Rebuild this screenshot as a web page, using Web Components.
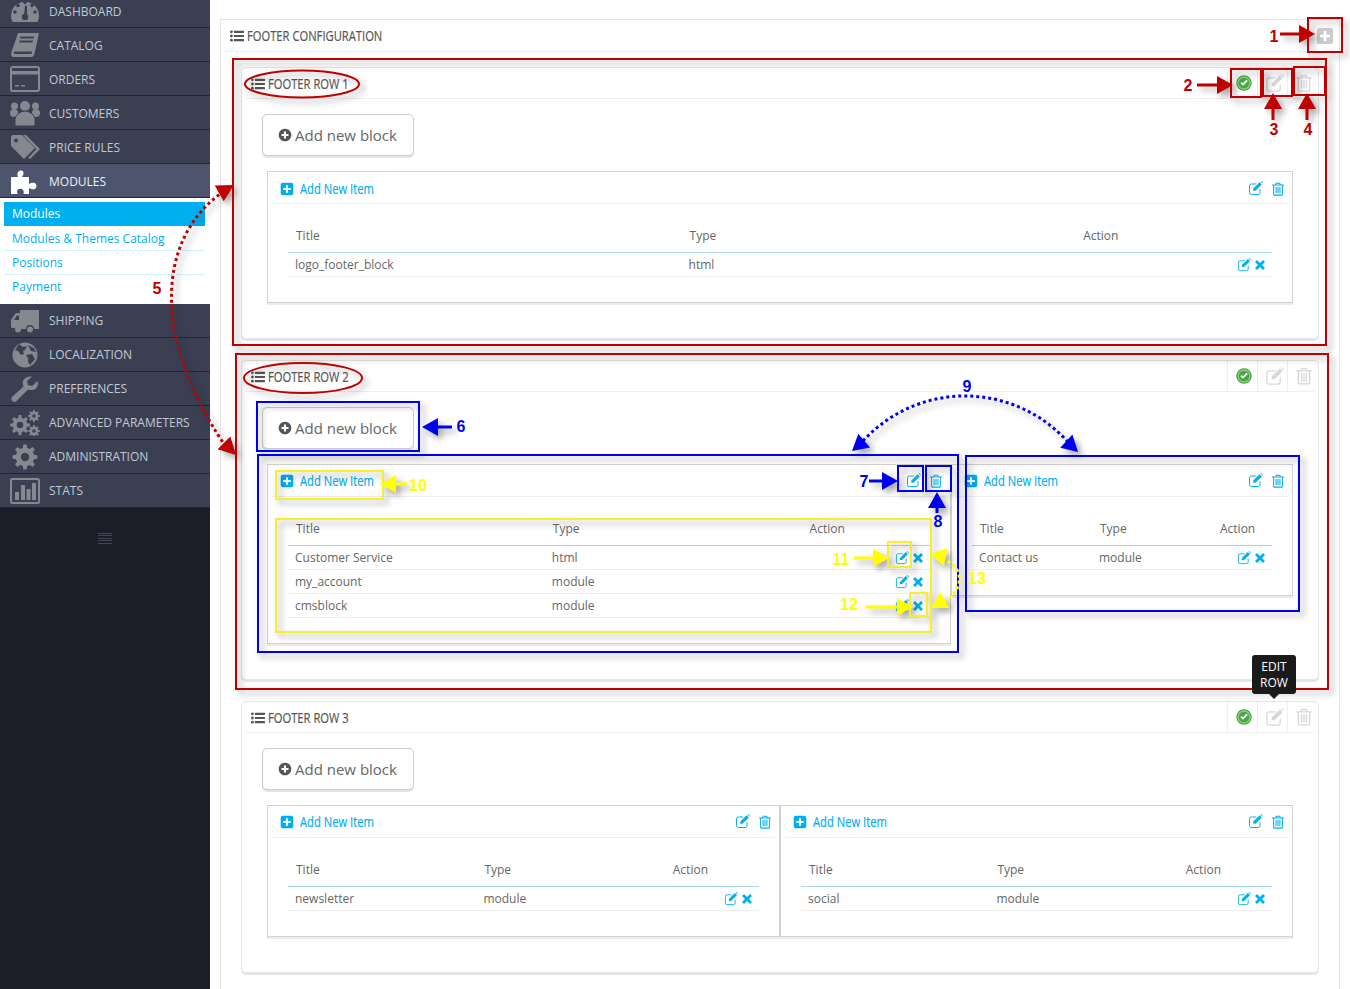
<!DOCTYPE html>
<html lang="en"><head><meta charset="utf-8"><title>Footer configuration</title>
<style>
html,body{margin:0;padding:0;background:#fff;height:989px;overflow:hidden;font-family:"Open Sans","Liberation Sans",sans-serif}
</style></head><body>
<x-app>
  <x-sidebar slot="side">
    <x-nav-item icon="gauge" low>DASHBOARD</x-nav-item>
    <x-nav-item icon="book" low>CATALOG</x-nav-item>
    <x-nav-item icon="card" low>ORDERS</x-nav-item>
    <x-nav-item icon="users" low>CUSTOMERS</x-nav-item>
    <x-nav-item icon="tags" low>PRICE RULES</x-nav-item>
    <x-nav-item icon="puzzle" active low>MODULES</x-nav-item>
    <x-sub-nav>
      <x-sub-item active>Modules</x-sub-item>
      <x-sub-item tall>Modules &amp; Themes Catalog</x-sub-item>
      <x-sub-item>Positions</x-sub-item>
      <x-sub-item last>Payment</x-sub-item>
    </x-sub-nav>
    <x-nav-item icon="truck">SHIPPING</x-nav-item>
    <x-nav-item icon="globe">LOCALIZATION</x-nav-item>
    <x-nav-item icon="wrench">PREFERENCES</x-nav-item>
    <x-nav-item icon="cogs">ADVANCED PARAMETERS</x-nav-item>
    <x-nav-item icon="cog">ADMINISTRATION</x-nav-item>
    <x-nav-item icon="chart">STATS</x-nav-item>
  </x-sidebar>
  <x-config-panel heading="FOOTER CONFIGURATION">
    <x-row-panel heading="FOOTER ROW 1" cols="1fr">
      <x-block low><x-table-row name="logo_footer_block" kind="html"></x-table-row></x-block>
    </x-row-panel>
    <x-row-panel heading="FOOTER ROW 2" cols="684px 342px">
      <x-block>
        <x-table-row name="Customer Service" kind="html"></x-table-row>
        <x-table-row name="my_account" kind="module"></x-table-row>
        <x-table-row name="cmsblock" kind="module"></x-table-row>
      </x-block>
      <x-block><x-table-row name="Contact us" kind="module"></x-table-row></x-block>
    </x-row-panel>
    <x-row-panel heading="FOOTER ROW 3" cols="513px 513px">
      <x-block><x-table-row name="newsletter" kind="module"></x-table-row></x-block>
      <x-block><x-table-row name="social" kind="module"></x-table-row></x-block>
    </x-row-panel>
  </x-config-panel>
  <x-annotations slot="over"></x-annotations>
  <x-tip slot="over">EDIT<br>ROW</x-tip>
</x-app>
<script>
const gear=(cx,cy,R,r,n,hole)=>{let d='';const s=Math.PI*2/n;for(let i=0;i<n;i++){const a=i*s;
 const p=[[a-s*.3,r],[a-s*.17,R],[a+s*.17,R],[a+s*.3,r]];
 p.forEach(([t,q],j)=>{d+=(i===0&&j===0?'M':'L')+(cx+q*Math.cos(t)).toFixed(2)+' '+(cy+q*Math.sin(t)).toFixed(2)})}
 d+='Z M'+(cx+hole)+' '+cy+' a'+hole+' '+hole+' 0 1 0 '+(-2*hole)+' 0 a'+hole+' '+hole+' 0 1 0 '+(2*hole)+' 0Z';return d};
const BG='var(--cut,#3a4052)';
const SIDE={
gauge:`<path d="M2.5 24A14 14 0 1 1 27.500 24Z"/><g fill="${BG}"><circle cx="15" cy="4.500" r="1.800"/><circle cx="8" cy="7.500" r="1.800"/><circle cx="22" cy="7.500" r="1.800"/><circle cx="5" cy="14" r="1.800"/><circle cx="25" cy="14" r="1.800"/><circle cx="15" cy="19" r="3.200"/><path d="M14 18 15 7.500 17 8 17 18Z"/></g>`,
book:`<path d="M8 1H29L24.500 21.500Q24 25 21 25H4Q0 25 1.500 20Z"/><g fill="${BG}"><path d="M10.500 4.500H24L23.600 6.500H10Z"/><path d="M9.600 8.500H23L22.600 10.500H9.200Z"/><path d="M4.500 19.500H22L21.600 22H5Q3.500 22 3.800 20.500Z"/></g>`,
card:`<rect x="1" y="1" width="28" height="24" rx="2" fill="none" stroke="currentColor" stroke-width="2"/><rect x="1" y="5" width="28" height="3.500"/><rect x="5" y="19" width="4" height="1.500"/><rect x="11" y="19" width="4" height="1.500"/>`,
users:`<circle cx="15" cy="6" r="5"/><circle cx="4.500" cy="6" r="3.500"/><circle cx="25.500" cy="6" r="3.500"/><circle cx="4" cy="13" r="4"/><circle cx="26" cy="13" r="4"/><path d="M9 13Q15 9 21 13Q25 16 25 19V26H5V19Q5 16 9 13Z" stroke="${BG}"/>`,
tags:`<path d="M1 3Q1 1 3 1H12L25 14 14 25 1 12ZM6 4.500A2 2 0 1 0 6.010 4.500Z" fill-rule="evenodd"/><path d="M16 1 30 15 20 25 18 24 26.500 15 13 1Z"/>`,
puzzle:`<path d="M1 9H8Q6 4 10 2.500 14 2 13.500 6 12.500 8 12 9H19V16Q22 14 25 15 28 18 25 21 22 22 19 20V27H13Q15 23 12 21 8 20 7 23 7 25 8 27H1Z"/>`,
truck:`<path d="M10 2H29V21H24A4 4 0 0 0 16 21H11A4 4 0 0 0 5 20H2Q1 20 1 18V12L5 6Q6 5 7 5H10ZM4 12H9V7.500H7Z" fill-rule="evenodd"/><circle cx="8" cy="21.500" r="3"/><circle cx="20" cy="21.500" r="3"/>`,
globe:`<circle cx="15" cy="13" r="12.500"/><path fill="${BG}" d="M9 2 13 5 17 4 15 8 13 9 14 12 11 13 8 9 5 8ZM16 13 22 12 25 17 20 23 18 20 18 16ZM18 3 24 6 26 10 21 9Z"/>`,
wrench:`<path d="M27.500 5 22 10 18 9 17 5 22 .5Q16 0 13.500 4 12 7 13.500 10.500L2 21Q.5 23 2.500 25T6.500 25L18 13.500Q23 15 26 12.500 29 9.500 27.500 5Z"/>`,
cogs:`<path fill-rule="evenodd" d="${gear(10,15,10,7.300,8,3.300)}"/><path fill-rule="evenodd" d="${gear(24,6,6,4.400,8,1.800)}"/><path fill-rule="evenodd" d="${gear(24,21,6,4.400,8,1.800)}"/>`,
cog:`<path fill-rule="evenodd" d="${gear(15,13,12.500,9.300,8,4.200)}"/>`,
chart:`<rect x="1" y="1" width="28" height="24" rx="1.500" fill="none" stroke="currentColor" stroke-width="2"/><rect x="5" y="14" width="4" height="8"/><rect x="11" y="7" width="4" height="15"/><rect x="16.500" y="11" width="4" height="11"/><rect x="22" y="5" width="4" height="17"/>`
};
const GLYPH={
list:`<circle cx="2" cy="4" r="2"/><circle cx="2" cy="10" r="2"/><circle cx="2" cy="16" r="2"/><rect x="5.500" y="2.400" width="14.500" height="3.200" rx=".5"/><rect x="5.500" y="8.400" width="14.500" height="3.200" rx=".5"/><rect x="5.500" y="14.400" width="14.500" height="3.200" rx=".5"/>`,
pluscircle:`<path fill-rule="evenodd" d="M10 1a9 9 0 1 0 .01 0ZM8.500 5h3v3.500H15v3h-3.500V15h-3v-3.500H5v-3h3.500Z"/>`,
plussquare:`<path fill-rule="evenodd" d="M4 1H16Q19 1 19 4V16Q19 19 16 19H4Q1 19 1 16V4Q1 1 4 1ZM8.500 4.500V8.500H4.500V11.500H8.500V15.500H11.500V11.500H15.500V8.500H11.500V4.500Z"/>`,
edit:`<path d="M11 4H4.500Q2 4 2 6.500V15.500Q2 18 4.500 18H13.500Q16 18 16 15.500V11" fill="none" stroke="currentColor" stroke-width="1.300"/><path d="M7 10 15.500 1.500 18.500 4.500 10 13H7ZM16.500.7Q17.500 0 18.500 .8L19.300 1.600Q20 2.500 19.300 3.500L18 2Z"/>`,
trash:`<path fill-rule="evenodd" d="M7 1H13L14 3.500H18.500V5H17V18Q17 19.500 15.500 19.500H4.500Q3 19.500 3 18V5H1.500V3.500H6ZM8 2.500 7.500 3.500H12.500L12 2.500ZM4.500 5V18H15.500V5ZM6.500 7H8V16H6.500ZM9.250 7H10.750V16H9.250ZM12 7H13.500V16H12Z"/>`,
times:`<path d="M4 0 10 6 16 0 20 4 14 10 20 16 16 20 10 14 4 20 0 16 6 10 0 4Z"/>`,
check:`<circle cx="10" cy="10" r="9.600" fill="#4a9a45"/><circle cx="10" cy="10" r="8.300" fill="#8ad07a"/><circle cx="10" cy="10" r="6.600" fill="#49a845"/><path d="M5.500 10.200 8.700 13.400 14.700 7.600 13 6 8.700 10.200 7.100 8.600Z" fill="#fff"/>`
};
const shell=(el,html)=>{el.attachShadow({mode:'open'}).innerHTML=html;return el.shadowRoot};
const def=(n,c)=>customElements.define(n,c);
const COND='display:inline-block;transform-origin:0 50%;transform:translateY(-1px) scaleX(.8);white-space:nowrap;font:14px "Open Sans",sans-serif;-webkit-text-stroke:.2px currentColor';

def('x-icon',class extends HTMLElement{connectedCallback(){if(this.shadowRoot)return;
 const n=this.getAttribute('name'),s=this.getAttribute('size')||14,c=this.getAttribute('color')||'currentColor';
 shell(this,`<style>:host{display:inline-flex;flex:none;color:${c};width:${s}px;height:${s}px}svg{display:block;width:100%;height:100%;fill:currentColor}</style><svg viewBox="0 0 20 20" aria-hidden="true">${GLYPH[n]}</svg>`)}});

def('x-app',class extends HTMLElement{constructor(){super();shell(this,`<style>
:host{display:flex;position:relative;width:1350px;height:989px;overflow:hidden;background:#fff}
.main{flex:1;min-width:0;padding:19px 10px 0;box-sizing:border-box}
</style><slot name="side"></slot><div class="main"><slot></slot></div><slot name="over"></slot>`)}});

def('x-sidebar',class extends HTMLElement{constructor(){super();shell(this,`<style>
:host{display:block;flex:none;width:210px;height:989px;background:#1b1e29;overflow:hidden}
.w{margin-top:-6px}
.burger{width:14px;margin:25px 0 0 98px;height:11px;background:repeating-linear-gradient(#404657 0 1px,transparent 1px 2.500px)}
</style><div class="w"><slot></slot></div><div class="burger"></div>`)}});

def('x-nav-item',class extends HTMLElement{constructor(){super();const n=this.getAttribute('icon');shell(this,`<style>
:host{display:flex;align-items:center;gap:9px;height:33px;padding-left:10px;background:#3a4052;border-bottom:1px solid #22252f;color:#c2c8d4;font:12px "Open Sans",sans-serif;--cut:#3a4052}
:host([low]){height:32px;padding-top:1px}
:host([active]){background:#4c556d;color:#eef0f4;--cut:#4c556d}
svg{width:30px;height:26px;flex:none;fill:currentColor;color:#85888f}
:host([active]) svg{color:#fff}
</style><svg viewBox="0 0 30 26" aria-hidden="true">${SIDE[n]}</svg><span><slot></slot></span>`)}});

def('x-sub-nav',class extends HTMLElement{constructor(){super();shell(this,`<style>:host{display:block;background:#fff;padding:4px 5px 5px 4px}</style><slot></slot>`)}});
def('x-sub-item',class extends HTMLElement{constructor(){super();shell(this,`<style>
:host{display:flex;align-items:center;height:23px;padding:0 8px;border-bottom:1px solid #d5f1fb;color:#00aff0;font:12px "Open Sans",sans-serif}
:host([tall]){height:24px}
:host([active]){background:#00aff0;color:#fff;border-bottom-color:#00aff0}
:host([last]){border-bottom-color:transparent}
</style><slot></slot>`)}});

def('x-config-panel',class extends HTMLElement{constructor(){super();shell(this,`<style>
:host{display:block;border:1px solid #e6e6e6;border-bottom:0;height:970px;box-sizing:border-box;padding:0 20px;background:#fff}
.h{display:flex;align-items:center;height:31px;margin:0 -17px;border-bottom:1px solid #eee;color:#555}
.h x-icon{margin:0 3px 0 6px}
.t{flex:1;min-width:0}
.t span{${COND}}
.b{margin-top:15px;display:flex;flex-direction:column;gap:21px}
</style><div class="h"><x-icon name="list" size="14"></x-icon><div class="t"><span>${this.getAttribute('heading')}</span></div><x-icon name="plussquare" size="18" color="#ccc" style="margin-right:2px"></x-icon></div><div class="b"><slot></slot></div>`)}});

def('x-row-panel',class extends HTMLElement{constructor(){super();shell(this,`<style>
:host{display:block;border:1px solid #e6e6e6;border-radius:5px;box-shadow:0 2px 0 rgba(0,0,0,.1);background:#fff;padding-bottom:35px}
.h{display:flex;align-items:center;height:30px;margin:0 4px;border-bottom:1px solid #eee;color:#555}
.h>x-icon{margin:1px 3px 0 5px}
.t{flex:1;min-width:0;padding-top:1px}
.t span{${COND}}
.a{display:flex;align-items:center;justify-content:center;width:29px;height:30px;border-left:1px solid #eee}
.acts{display:flex;margin-right:-3px}
.btn{display:inline-flex;align-items:center;gap:3px;box-sizing:border-box;width:152px;height:42px;margin:15px 0 15px 20px;padding-left:15px;border:1px solid #ccc;border-radius:5px;box-shadow:0 2px 0 rgba(0,0,0,.1);background:#fff;color:#666;font:15px "Open Sans",sans-serif}
.g{display:grid;align-items:start;grid-template-columns:${this.getAttribute('cols')};margin-left:25px;width:1026px}
</style><div class="h"><x-icon name="list" size="14"></x-icon><div class="t"><span>${this.getAttribute('heading')}</span></div>
<div class="acts"><span class="a"><x-icon name="check" size="16" style="margin-left:2px"></x-icon></span><span class="a"><x-icon name="edit" size="19" color="#d8d8d8" style="margin-left:3px"></x-icon></span><span class="a"><x-icon name="trash" size="18" color="#d8d8d8" style="margin-left:2px"></x-icon></span></div></div>
<div class="btn"><x-icon name="pluscircle" size="14" color="#555"></x-icon>Add new block</div><div class="g"><slot></slot></div>`)}});

def('x-block',class extends HTMLElement{constructor(){super();shell(this,`<style>
:host{display:block;box-sizing:border-box;border:1px solid #d2d2d2;box-shadow:0 2px 0 rgba(0,0,0,.08);background:#fff;padding-bottom:25px;min-width:0}
.h{display:flex;align-items:center;margin:0 4px;border-bottom:1px solid #eee;padding:0 3px 0 8px;color:#00aff0;box-sizing:border-box;height:32px}
:host([low]) .h{padding-top:2px}
.l{flex:1;margin-left:6px;min-width:0}
.l span{${COND}}
.ico{display:flex;align-items:center;gap:8px}
.tb{margin:15px 20px 0}
.th{display:grid;grid-template-columns:40% 40% 20%;height:33px;align-items:center;border-bottom:1px solid #a9d7ea;color:#666;font:12px "Open Sans",sans-serif}
.th div{padding-left:8px}
</style><div class="h"><x-icon name="plussquare" size="14"></x-icon><div class="l"><span>Add New Item</span></div><div class="ico"><x-icon name="edit" size="15"></x-icon><x-icon name="trash" size="14"></x-icon></div></div>
<div class="tb"><div class="th"><div>Title</div><div>Type</div><div>Action</div></div><slot></slot></div>`)}});

def('x-table-row',class extends HTMLElement{constructor(){super();shell(this,`<style>
:host{display:grid;grid-template-columns:40% 40% 20%;height:23px;align-items:center;border-bottom:1px solid #eee;color:#666;font:12px "Open Sans",sans-serif}
div{padding-left:7px}
.x{display:flex;justify-content:flex-end;gap:4px;padding:0 7px 0 0;color:#00aff0}
</style><div>${this.getAttribute('name')}</div><div>${this.getAttribute('kind')}</div><div class="x"><x-icon name="edit" size="14"></x-icon><x-icon name="times" size="10" style="margin-top:2px"></x-icon></div>`)}});

def('x-tip',class extends HTMLElement{constructor(){super();shell(this,`<style>
:host{position:absolute;left:1252px;top:655px;width:44px;height:39px;box-sizing:border-box;padding-top:4px;background:#1a1a1a;border-radius:3px;color:#fff;font:12px/16px "Open Sans",sans-serif;text-align:center}
:host::after{content:"";position:absolute;left:17px;top:39px;border:5px solid transparent;border-top-color:#1a1a1a;border-bottom:0}
</style><slot></slot>`)}});

const R='#bf0000',B='#0000f0',Y='#f7ef2e',YY='#ffff00';
const box=(x1,y1,x2,y2,c,w=2)=>`<rect x="${x1}" y="${y1}" width="${x2-x1}" height="${y2-y1}" fill="none" stroke="${c}" stroke-width="${w}"/>`;
const head=(tx,ty,fx,fy,c,l=16,h=9)=>{const a=Math.atan2(ty-fy,tx-fx),bx=tx-l*Math.cos(a),by=ty-l*Math.sin(a),nx=-Math.sin(a)*h,ny=Math.cos(a)*h;
 return `<path fill="${c}" d="M${tx} ${ty}L${(bx+nx).toFixed(1)} ${(by+ny).toFixed(1)}L${(bx-nx).toFixed(1)} ${(by-ny).toFixed(1)}Z"/>`};
const arrow=(x1,y1,x2,y2,c)=>{const a=Math.atan2(y2-y1,x2-x1);return `<line x1="${x1}" y1="${y1}" x2="${(x2-10*Math.cos(a)).toFixed(1)}" y2="${(y2-10*Math.sin(a)).toFixed(1)}" stroke="${c}" stroke-width="3"/>`+head(x2,y2,x1,y1,c)};
const label=(x,y,t,c)=>`<text x="${x}" y="${y}" fill="${c}" font-family="Liberation Sans" font-weight="700" font-size="16" text-anchor="middle" dominant-baseline="central">${t}</text>`;
const dots=(d,c)=>`<path d="${d}" fill="none" stroke="${c}" stroke-width="3" stroke-dasharray="3 3"/>`;
def('x-annotations',class extends HTMLElement{constructor(){super();shell(this,`<style>
:host{position:absolute;left:0;top:0;width:1350px;height:989px;pointer-events:none}
svg{display:block}
.s{filter:drop-shadow(4px 4px 3px rgba(0,0,0,.35))}
</style><svg width="1350" height="989" viewBox="0 0 1350 989"><g class="s">`+
box(233,59,1326,345,R)+box(236,354,1328,689,R)+box(1308,18,1342,52,R)+box(1231,69,1261,97,R)+box(1263,69,1292,96,R)+box(1294,67,1325,95,R)+
`<ellipse cx="302" cy="84" rx="57" ry="13.500" fill="none" stroke="${R}" stroke-width="2"/><ellipse cx="303" cy="378" rx="59" ry="15" fill="none" stroke="${R}" stroke-width="2"/>`+
arrow(1280,34,1315,34,R)+arrow(1197,85,1233,85,R)+arrow(1273,120,1273,93,R)+arrow(1307,120,1307,93,R)+
dots('M224 191C154 240 154 340 224 444',R)+head(234,185,220,193,R,17,9)+head(236,455,222,441,R,17,9)+
box(257,402,419,451,B)+box(258,455,958,652,B)+box(966,456,1299,611,B)+box(898,466,923,491,B)+box(926,466,951,491,B)+
arrow(452,427,422,427,B)+arrow(869,481,898,481,B)+arrow(937,513,937,492,B)+
dots('M863 441A138 138 0 0 1 1067 441',B)+head(852,451,866,439,B)+head(1078,452,1064,439,B)+
box(276,471,383,499,Y)+box(276,519,931,632,Y)+box(888,542,911,567,Y)+box(910,593,927,616,Y)+
arrow(407,484,380,484,YY)+arrow(854,558,889,558,YY)+arrow(866,607,913,607,YY)+
dots('M942 559C965 566 965 590 943 602',YY)+head(930,554,945,557,YY)+head(931,608,945,600,YY)+
`</g>`+label(1274,36,'1',R)+label(1188,85,'2',R)+label(1274,129,'3',R)+label(1308,129,'4',R)+label(157,288,'5',R)+
label(461,426,'6',B)+label(864,481,'7',B)+label(938,521,'8',B)+label(967,386,'9',B)+
label(418,485,'10',YY)+label(841,559,'11',YY)+label(849,604,'12',YY)+label(977,578,'13',YY)+`</svg>`)}});
</script>
</body></html>
